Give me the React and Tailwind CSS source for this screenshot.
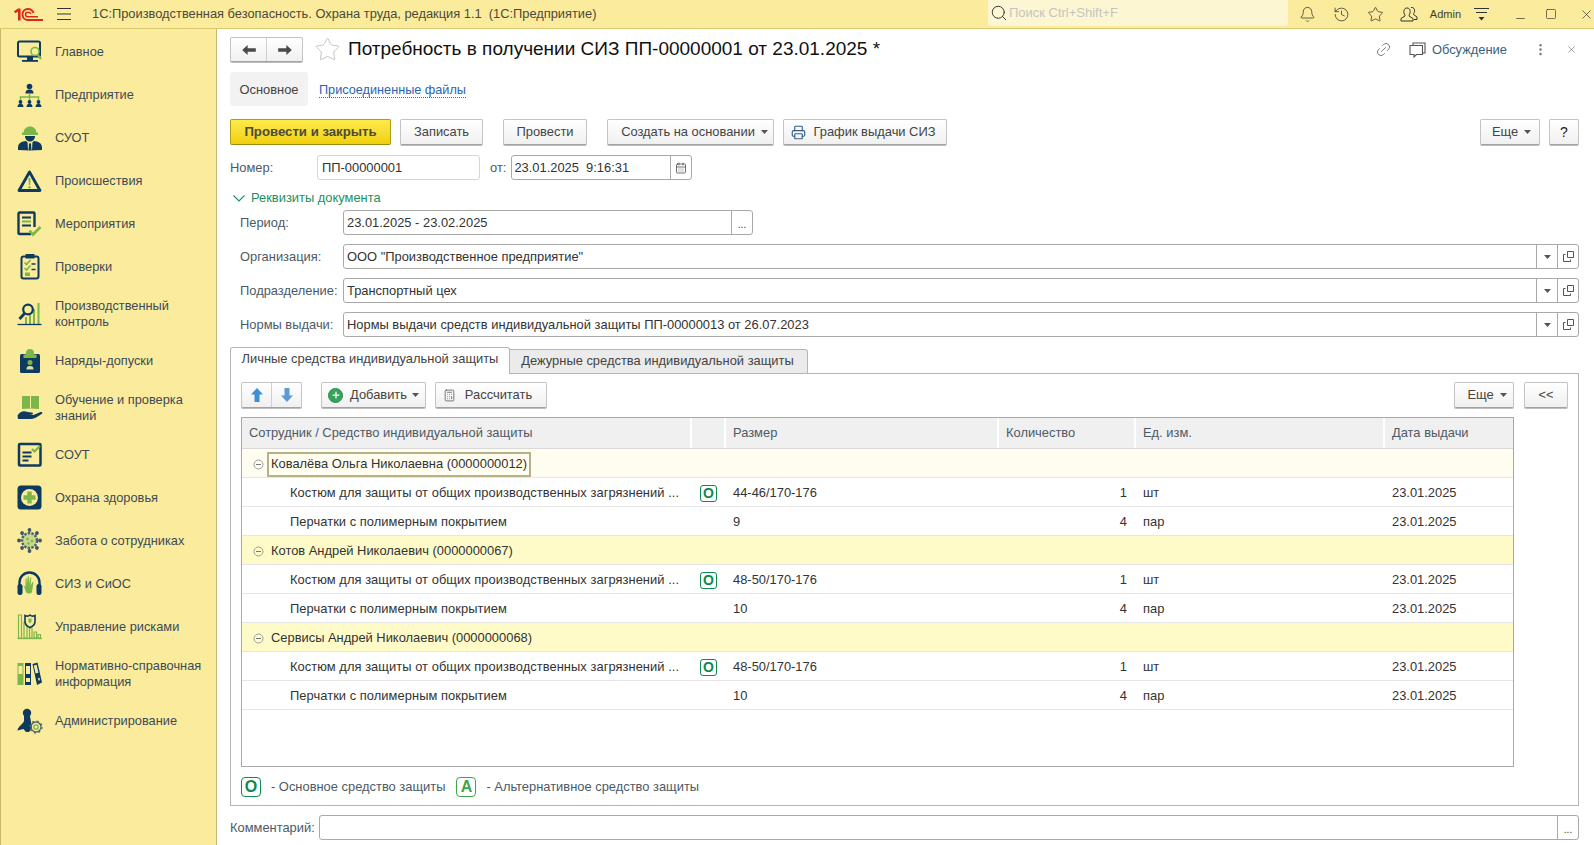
import React from "react";
import { Bell, History, Star, Link2, EllipsisVertical, X, Calculator, Printer, CalendarDays, Search, Minus, Square, Plus } from "lucide-react";

const N = "#0e3a5f";
const G = "#7cb648";
const Y = "#fbec9d";

const Caret = ({ className = "" }) => (
  <svg width="7" height="4" viewBox="0 0 7 4" className={className}><path d="M0 0h7L3.500 4z" fill="#555" /></svg>
);

const Icons = {
  main: (
    <svg width="26" height="24" viewBox="0 0 26 24" fill="none">
      <rect x="1" y="1.500" width="22" height="15" rx="1.500" stroke={N} strokeWidth="2" />
      <path d="M5 20h16v1.800H5z" fill={N} /><path d="M10 17h6v3h-6z" fill={N} />
      <circle cx="18" cy="11.500" r="4" stroke={G} strokeWidth="1.600" fill={Y} /><path d="m20.500 14.500 3.500 4.500" stroke={G} strokeWidth="2.200" />
    </svg>
  ),
  org: (
    <svg width="26" height="24" viewBox="0 0 26 24" fill="none">
      <circle cx="12.500" cy="3.500" r="2.800" fill={N} /><path d="M8.500 10.500c0-3.500 2-4 4-4s4 .5 4 4z" fill={N} />
      <path d="M12.500 10.500v3.500M3.500 18v-4h18v4M12.500 14v4" stroke={G} strokeWidth="1.500" />
      {[3.500, 12.500, 21.500].map((x) => (
        <g key={x}><circle cx={x} cy="19" r="1.900" fill={N} /><path d={`M${x - 3} 24.500c0-3 1-3.800 3-3.800s3 .8 3 3.800z`} fill={N} /></g>
      ))}
    </svg>
  ),
  suot: (
    <svg width="26" height="26" viewBox="0 0 26 26" fill="none">
      <path d="M6.500 8.500c0-4.500 3-7 6.500-7s6.500 2.500 6.500 7z" fill={G} /><path d="M5 7.500h16V10H5z" fill={G} />
      <path d="M8 11h10c0 3-2 5.500-5 5.500S8 14 8 11z" fill={N} />
      <path d="M1 25v-2.500c0-4.500 4-6 8-6.500l4 3 4-3c4 .5 8 2 8 6.500V25c-8 .5-16 .5-24 0z" fill={N} />
      <path d="M10.500 16.500 13 19l2.500-2.500-.5 8.500h-4z" fill={Y} /><path d="M12 18.500h2l.5 6.500h-3z" fill={N} />
    </svg>
  ),
  inc: (
    <svg width="26" height="24" viewBox="0 0 26 24" fill="none">
      <path d="M12.500 3 2 21.500h21z" stroke={N} strokeWidth="2.800" strokeLinejoin="round" />
      <path d="M11.500 9h2l-.3 7h-1.400z" fill={G} /><circle cx="12.500" cy="18.300" r="1.200" fill={G} />
    </svg>
  ),
  ev: (
    <svg width="26" height="26" viewBox="0 0 26 26" fill="none">
      <path d="M14 23H2.500a1 1 0 0 1-1-1V2.500a1 1 0 0 1 1-1h14a1 1 0 0 1 1 1V16" stroke={N} strokeWidth="2.400" />
      <path d="M5 6.500h9" stroke={N} strokeWidth="2" /><path d="M5 10.500h9" stroke={G} strokeWidth="2" /><path d="M5 14.500h9" stroke={N} strokeWidth="2" />
      <path d="m12.500 19.500 3.500 4L23.500 16" stroke={G} strokeWidth="2.600" />
    </svg>
  ),
  chk: (
    <svg width="26" height="28" viewBox="0 0 26 28" fill="none">
      <rect x="4.500" y="3.500" width="17" height="22" rx="2" stroke={N} strokeWidth="2" />
      <path d="M8.500 1h9v4.500h-9z" fill={N} />
      <path d="m7.500 9.500 2 2 4-4.500M7.500 15l2 2 4-4.500" stroke={G} strokeWidth="1.700" />
      <path d="M14.500 11h4M14.500 16.500h4" stroke={N} strokeWidth="1.300" /><path d="M8 19.500h5v3.500H8z" fill={G} />
    </svg>
  ),
  pc: (
    <svg width="26" height="24" viewBox="0 0 26 24" fill="none">
      <path d="M9 15v7M13 13v9M17 7v15M21.500 1v21" stroke={G} strokeWidth="2" />
      <circle cx="11" cy="7.500" r="4.800" stroke={N} strokeWidth="2.200" fill={Y} /><path d="M7.500 11.500 2.500 17" stroke={N} strokeWidth="2.800" />
      <path d="M0.500 22.500h24" stroke={N} strokeWidth="1.300" />
    </svg>
  ),
  nar: (
    <svg width="26" height="26" viewBox="0 0 26 26" fill="none">
      <rect x="3" y="6" width="20" height="19" rx="1.500" fill={N} /><path d="M9 6.500V5a4 4 0 0 1 8 0v1.500h2.500v3.500h-13V6.500z" fill={G} />
      <circle cx="13" cy="14.500" r="2.500" fill={G} /><path d="M9.500 21.500c0-3 1.500-3.500 3.500-3.500s3.500 .5 3.500 3.500z" fill="#d5e0a8" />
    </svg>
  ),
  edu: (
    <svg width="26" height="26" viewBox="0 0 26 26" fill="none">
      <path d="M5 1h8.500v12.500l-8.500.5zM13.500 1H22v13l-8.500-.5z" fill={G} /><path d="M13.500 1v12" stroke={Y} />
      <path d="M1 24l-.500-3.500c3-5 7-5 10-3.500l4 .5c2 0 2 2 0 2h-2l4 .5 7-3c2-.5 2.500 1 1 2-4 3-8 5-11 5-4 0-8 0-12.500 0z" fill={N} />
    </svg>
  ),
  sout: (
    <svg width="26" height="26" viewBox="0 0 26 26" fill="none">
      <rect x="2" y="2" width="21.500" height="21.500" rx="1" stroke={N} strokeWidth="2.500" />
      <path d="M5.500 10.500h9M5.500 14.500h9M5.500 18.500h6" stroke={N} strokeWidth="2" /><path d="m15 7 2.500 2.500L23 4" stroke={G} strokeWidth="2.200" />
    </svg>
  ),
  med: (
    <svg width="26" height="26" viewBox="0 0 26 26" fill="none">
      <rect x="0.500" y="0.500" width="24" height="24" rx="3.500" fill={N} /><circle cx="12.500" cy="12.500" r="8.500" fill={Y} />
      <path d="M10.300 6.500h4.400v3.800h3.800v4.400h-3.800v3.800h-4.400v-3.800H6.500v-4.400h3.800z" fill={G} />
    </svg>
  ),
  care: (
    <svg width="26" height="26" viewBox="0 0 26 26" fill="none">
      <circle cx="12.500" cy="12.500" r="7.500" fill="#c9d98a" stroke="#4b6670" strokeWidth="2.500" strokeDasharray="2.500 1.200" />
      <circle cx="10.500" cy="11" r="1.300" fill={G} /><circle cx="15" cy="13" r="1.300" fill={G} /><circle cx="11.500" cy="15.500" r="1.300" fill={G} />
      {[0, 45, 90, 135, 180, 225, 270, 315].map((a) => (
        <circle key={a} cx="12.500" cy="2" r="1.900" fill="#3f566b" transform={`rotate(${a} 12.500 12.500)`} />
      ))}
    </svg>
  ),
  siz: (
    <svg width="26" height="26" viewBox="0 0 26 26" fill="none">
      <path d="M2.500 14v-2.500a10 10 0 0 1 20 0V14" stroke={N} strokeWidth="2.400" />
      <rect x="0.500" y="13" width="5" height="11" rx="2.200" fill={N} /><rect x="19.500" y="13" width="5" height="11" rx="2.200" fill={N} />
      <path d="M9 21l-2.500-7 2 2V7.500h1.200v6l1-8h1.200v8l1.300-7h1.100l-.8 8 2-3.500h1L15 21c-1 2-5 2-6 0z" fill={G} />
    </svg>
  ),
  risk: (
    <svg width="26" height="26" viewBox="0 0 26 26" fill="none">
      <path d="M1.500 1h3v23h-3zM7 8h3v16H7zM12.500 14H15v10h-2.500zM17 18h2.500v6H17zM21 20.500h2.500V24H21z" stroke={G} strokeWidth="1.200" />
      <path d="M0.500 24.500h24.500" stroke={G} strokeWidth="1.300" />
      <path d="M8 1.500c2 1 3.500 1 5-.5 1.500 1.500 3 1.500 5 .5v6c0 3-2.500 5-5 6-2.500-1-5-3-5-6z" fill={Y} stroke={N} strokeWidth="1.600" />
      <path d="M11.500 4.500h3v3L13 9.500l-1.500-2z" fill={G} />
    </svg>
  ),
  ref: (
    <svg width="26" height="24" viewBox="0 0 26 24" fill="none">
      <rect x="0.500" y="1" width="6" height="22" fill={G} /><rect x="8" y="1" width="6" height="22" fill={N} />
      <path d="M15.500 2l5-1.500 4.500 20-5 2.500z" fill={N} />
      <path d="M1.500 4h4v8h-4zM9 4h4v8H9zM16.800 3.500l2.800-.8 1.800 8-2.800.8z" fill={Y} /><path d="M9 16h4v4H9zM21 16l1.500-.3.500 2.500-1.500.3z" fill={Y} />
    </svg>
  ),
  adm: (
    <svg width="26" height="26" viewBox="0 0 26 26" fill="none">
      <circle cx="10" cy="5" r="4.200" fill={N} /><path d="M7 8h6l1 6 1 6-3 4H9l-2.500-3-6 1.500c0-3.500 5.500-6.500 6.500-9.500z" fill={N} />
      <circle cx="19" cy="19" r="2.200" stroke={G} strokeWidth="1.300" /><circle cx="19" cy="19" r="5" stroke="#4b6670" strokeWidth="1.300" /><circle cx="19" cy="19" r="6" stroke="#4b6670" strokeWidth="1.300" strokeDasharray="2 2.700" />
    </svg>
  ),
};

const NAV = [
  ["main", ["Главное"]], ["org", ["Предприятие"]], ["suot", ["СУОТ"]], ["inc", ["Происшествия"]], ["ev", ["Мероприятия"]], ["chk", ["Проверки"]],
  ["pc", ["Производственный", "контроль"]], ["nar", ["Наряды-допуски"]], ["edu", ["Обучение и проверка", "знаний"]], ["sout", ["СОУТ"]],
  ["med", ["Охрана здоровья"]], ["care", ["Забота о сотрудниках"]], ["siz", ["СИЗ и СиОС"]], ["risk", ["Управление рисками"]],
  ["ref", ["Нормативно-справочная", "информация"]], ["adm", ["Администрирование"]],
];

function Btn({ children, className = "", primary }) {
  return (
    <div
      className={
        "flex h-[26px] shrink-0 items-center justify-center rounded-[2px] border " +
        (primary
          ? "border-[#b29b16] border-b-[#9c8a10] bg-gradient-to-b from-[#fdeb48] to-[#f1d000] text-[13.200px] font-bold text-[#4b4b3a] "
          : "border-[#c4c4c4] border-b-[#a2a2a2] bg-gradient-to-b from-white to-[#f0f0f0] text-[12.900px] text-[#444] shadow-[0_1px_0_#bdbdbd] ") +
        className
      }
    >
      {children}
    </div>
  );
}

function Field({ children, className = "" }) {
  return <div className={"flex h-[25px] items-center rounded-[3px] border border-[#a9a9a9] bg-white text-[#333] " + className}>{children}</div>;
}

function LinkField({ label, value }) {
  return (
    <div className="flex h-[25px] items-center pl-[10px]">
      <div className="w-[103px] text-[#4d5a66]">{label}</div>
      <Field className="flex-1">
        <div className="flex-1 pl-[3px]">{value}</div>
        <div className="flex h-full w-[21px] items-center justify-center border-l border-[#a9a9a9]"><Caret /></div>
        <div className="flex h-full w-[21px] items-center justify-center border-l border-[#a9a9a9]">
          <svg width="13" height="13" viewBox="0 0 13 13" fill="none"><path d="M5.500 1.500h6v6h-6z" stroke="#555" /><path d="M3.500 4.500h-2v7h7v-2" stroke="#555" /></svg>
        </div>
      </Field>
    </div>
  );
}

const COLS = "grid grid-cols-[450px_34px_273px_137px_249px_1fr]";

function Badge({ small, letter = "O", green = "#0d8a4f" }) {
  return (
    <div
      style={{ borderColor: green, color: green }}
      className={(small ? "h-[17px] w-[17px] rounded-[3px] text-[14px] " : "h-[20px] w-[20px] rounded-[4px] text-[16px] ") + "flex items-center justify-center border bg-white font-bold"}
    >
      {letter}
    </div>
  );
}

function Group({ name, selected }) {
  return (
    <div className={COLS + " h-[29px] items-center border-b border-[#e6e6e6] " + (selected ? "bg-[#fffdf0]" : "bg-[#fefbc9]")}>
      <div className="col-span-6 flex items-center pl-[11px] pt-[2px]">
        <svg width="11" height="11" viewBox="0 0 11 11" fill="none"><circle cx="5.500" cy="5.500" r="4.500" stroke="#9c9c9c" /><path d="M3 5.500h5" stroke="#777" /></svg>
        <div className={"ml-[3px] flex h-[25px] items-center px-[2px] text-[#333] " + (selected ? "border-2 border-[#b7b286]" : "border-2 border-transparent")}>{name}</div>
      </div>
    </div>
  );
}

function Item({ name, badge, size, qty, unit, date = "23.01.2025" }) {
  return (
    <div className={COLS + " h-[29px] items-center border-b border-[#e6e6e6] bg-white pt-[2px] text-[#333]"}>
      <div className="whitespace-nowrap pl-[48px] tracking-[0.05px]">{name}</div>
      <div className="flex justify-center pr-[1px]">{badge && <Badge small />}</div>
      <div className="pl-[7px]">{size}</div>
      <div className="pr-[9px] text-right">{qty}</div>
      <div className="pl-[7px]">{unit}</div>
      <div className="pl-[7px]">{date}</div>
    </div>
  );
}

const Head = ({ children, last }) => (
  <div className={"flex h-full items-center bg-[#f0f0f0] pl-[7px] text-[#4d5a66] " + (last ? "" : "border-r-2 border-white")}>{children}</div>
);

export default function App() {
  const suit = "Костюм для защиты от общих производственных загрязнений ...";
  const gl = "Перчатки с полимерным покрытием";
  return (
    <div className="flex h-[845px] w-[1594px] flex-col overflow-hidden bg-white font-['Liberation_Sans',Arial,sans-serif] text-[12.900px]">
      {/* title bar */}
      <div className="flex h-[29px] shrink-0 items-center border-b border-[#d8c86e] bg-[#fbec9d]">
        <svg width="29" height="13" viewBox="0 0 29 13" fill="none" className="ml-[14px]">
          <path d="M0 3.200 4 .5h2.600v12H4V3.800L1.200 5.300z" fill="#d92a1c" />
          <path d="M19.500 5C18.500 2 16.500 1 14 1c-3.500 0-5.500 2.500-5.500 5.500S10.500 12 14 12h15" stroke="#d92a1c" strokeWidth="2" />
          <path d="M17 6c-.5-1-1.500-1.700-3-1.700s-2.500 1-2.500 2.200 1 2.300 2.500 2.300h10" stroke="#d92a1c" strokeWidth="1.600" />
        </svg>
        <svg width="14" height="14" viewBox="0 0 14 14" className="ml-[14px]"><path d="M0 1.500h14M0 7h14M0 12.500h14" stroke="#333" strokeWidth="1.100" /></svg>
        <div className="ml-[21px] w-[896px] whitespace-pre text-[12.850px] text-[#4a4a3a]">1С:Производственная безопасность. Охрана труда, редакция 1.1  (1С:Предприятие)</div>
        <div className="flex h-[26px] w-[300px] items-center self-start rounded-b-[3px] bg-[#fdf6d2] pl-[2px]">
          <Search size={18} strokeWidth={1.300} className="text-[#333]" />
          <span className="ml-[1px] text-[13px] text-[#c5c5c0]">Поиск Ctrl+Shift+F</span>
        </div>
        <Bell size={17} strokeWidth={1.100} className="ml-[11px] text-[#333]" />
        <History size={17} strokeWidth={1.100} className="ml-[17px] text-[#333]" />
        <Star size={17} strokeWidth={1.100} className="ml-[17px] text-[#333]" />
        <svg width="18" height="17" viewBox="0 0 18 17" fill="none" className="ml-[16px]" stroke="#333" strokeWidth="1">
          <path d="M7 2c3 0 3.500 3 3 5-.5 1.500-1 2-1 3l4 2.500V15H1v-2.500L5 10c0-1-.5-1.500-1-3-.5-2 0-5 3-5z" />
          <path d="M11 1.500c2.500-.500 4 1.500 3.500 4-.3 1.500-1 2-1 3l3.500 2.500v2.500h-3" />
        </svg>
        <span className="ml-[12px] text-[11px] text-[#3e3e2e]">Admin</span>
        <svg width="15" height="14" viewBox="0 0 15 14" fill="none" className="ml-[13px]"><path d="M0 1.500h15M2 5.500h11" stroke="#333" /><path d="M4.500 10h6l-3 3.500z" fill="#333" /></svg>
        <Minus size={13} strokeWidth={1.200} className="ml-[25px] mt-[9px] text-[#222]" />
        <Square size={12} strokeWidth={1.200} className="ml-[18px] text-[#222]" />
        <X size={15} strokeWidth={1} className="ml-[22px] text-[#222]" />
      </div>

      <div className="flex min-h-0 flex-1">
        {/* sidebar */}
        <div className="w-[217px] shrink-0 border-x border-x-[#c4b96f] bg-[#fbec9d] pl-[16px] pt-[1px]">
          {NAV.map(([k, lines]) => (
            <div key={k} className={"flex items-center " + (lines.length > 1 ? "h-[51px]" : "h-[43px]")}>
              <div className="flex w-[38px] shrink-0 items-center">{Icons[k]}</div>
              <div className="text-[12.800px] leading-[16px] text-[#3d4a55]">{lines.map((l) => <div key={l}>{l}</div>)}</div>
            </div>
          ))}
        </div>

        {/* content */}
        <div className="min-w-0 flex-1 pl-[13px] pr-[15px] pt-[8px]">
          <div className="flex h-[25px] items-center">
            <div className="flex h-[25px] w-[73px] rounded-[2px] border border-[#c4c4c4] border-b-[#a2a2a2] bg-gradient-to-b from-white to-[#f0f0f0] shadow-[0_1px_0_#bdbdbd]">
              <div className="flex flex-1 items-center justify-center border-r border-[#d0d0d0]">
                <svg width="14" height="10" viewBox="0 0 15 11"><path d="M0 5.500 6 0v3.500h9v4H6V11z" fill="#4a4a4a" /></svg>
              </div>
              <div className="flex flex-1 items-center justify-center">
                <svg width="14" height="10" viewBox="0 0 15 11"><path d="M15 5.500 9 0v3.500H0v4h9V11z" fill="#4a4a4a" /></svg>
              </div>
            </div>
            <Star size={27} strokeWidth={0.700} className="ml-[11px] text-[#b4b4b4]" />
            <div className="ml-[7px] flex-1 whitespace-nowrap text-[19px] text-[#111]">Потребность в получении СИЗ ПП-00000001 от 23.01.2025 *</div>
            <Link2 size={17} strokeWidth={1.100} className="-rotate-45 text-[#666]" />
            <svg width="17" height="16" viewBox="0 0 17 16" fill="none" className="ml-[17px]" stroke="#555" strokeWidth="1.100"><path d="M4 3V1h12v10h-2" /><path d="M1 3.500h12.500v9H7.500l-2.500 2.500v-2.500H1z" /></svg>
            <span className="ml-[6px] text-[#39617f]">Обсуждение</span>
            <EllipsisVertical size={15} strokeWidth={2} className="ml-[26px] text-[#777]" />
            <X size={11} strokeWidth={1.300} className="ml-[18px] mr-[2px] text-[#666]" />
          </div>

          <div className="mt-[10px] flex h-[34px] items-center">
            <div className="flex h-full w-[78px] items-center justify-center rounded-[3px] bg-[#f2f2f2] pt-[2px] text-[#444]">Основное</div>
            <span className="ml-[11px] mt-[2px] border-b border-dotted border-[#2b6cb0] text-[12.700px] leading-[14px] text-[#2a63b1]">Присоединенные файлы</span>
          </div>

          <div className="mt-[13px] flex">
            <Btn primary className="w-[161px]">Провести и закрыть</Btn>
            <Btn className="ml-[9px] w-[83px]">Записать</Btn>
            <Btn className="ml-[20px] w-[84px]">Провести</Btn>
            <Btn className="ml-[20px] w-[167px] pl-[8px]">Создать на основании<Caret className="ml-[6px]" /></Btn>
            <Btn className="ml-[9px] w-[164px] pr-[3px]"><Printer size={15} strokeWidth={1.800} className="mr-[7px] text-[#335f86]" />График выдачи СИЗ</Btn>
            <div className="flex-1" />
            <Btn className="w-[60px] pl-[3px]">Еще<Caret className="ml-[6px]" /></Btn>
            <Btn className="ml-[9px] w-[30px]"><span className="text-[14px] text-[#222]">?</span></Btn>
          </div>

          <div className="mt-[10px] flex h-[25px] items-center">
            <div className="w-[87px] text-[#4d5a66]">Номер:</div>
            <Field className="w-[163px] border-[#d6d6d6] pl-[4px]">ПП-00000001</Field>
            <span className="ml-[10px] text-[#4d5a66]">от:</span>
            <Field className="ml-[5px] w-[181px]">
              <div className="flex-1 whitespace-pre pl-[2px]">23.01.2025  9:16:31</div>
              <div className="flex h-full w-[21px] items-center justify-center border-l border-[#a9a9a9]"><CalendarDays size={12} strokeWidth={1.500} className="text-[#444]" /></div>
            </Field>
          </div>

          <div className="mt-[10px] flex h-[16px] items-center pl-[3px] text-[#1a9160]">
            <svg width="12" height="7" viewBox="0 0 12 7" fill="none"><path d="M.5.500 6 6 11.500.5" stroke="#1a9160" strokeWidth="1.100" /></svg>
            <span className="ml-[6px]">Реквизиты документа</span>
          </div>

          <div className="mt-[4px] flex h-[25px] items-center pl-[10px]">
            <div className="w-[103px] text-[#4d5a66]">Период:</div>
            <Field className="w-[410px]">
              <div className="flex-1 pl-[3px]">23.01.2025 - 23.02.2025</div>
              <div className="flex h-full w-[21px] items-end justify-center border-l border-[#a9a9a9] pb-[4px] text-[10px] leading-[10px]">...</div>
            </Field>
          </div>
          <div className="mt-[9px] flex flex-col gap-[9px]">
            <LinkField label="Организация:" value={'ООО "Производственное предприятие"'} />
            <LinkField label="Подразделение:" value="Транспортный цех" />
            <LinkField label="Нормы выдачи:" value="Нормы выдачи средств индивидуальной защиты ПП-00000013 от 26.07.2023" />
          </div>

          {/* tabs */}
          <div className="mt-[10px] flex h-[27px]">
            <div className="relative z-10 flex h-[27px] w-[280px] items-center justify-center rounded-t-[3px] border border-b-0 border-[#b5b5b5] bg-white pb-[4px] text-[#444]">Личные средства индивидуальной защиты</div>
            <div className="mt-[2px] flex h-[25px] w-[298px] items-center justify-center rounded-tr-[3px] border border-l-0 border-[#b5b5b5] bg-[#ebebeb] pb-[2px] pr-[2px] text-[#444]">Дежурные средства индивидуальной защиты</div>
          </div>
          <div className="-mt-px flex h-[433px] flex-col border border-[#b5b5b5] px-[10px] pt-[8px]">
            <div className="flex">
              <div className="flex h-[26px] w-[61px] rounded-[2px] border border-[#c4c4c4] border-b-[#a2a2a2] bg-gradient-to-b from-white to-[#f0f0f0] shadow-[0_1px_0_#bdbdbd]">
                <div className="flex flex-1 items-center justify-center border-r border-[#d0d0d0]">
                  <svg width="12" height="14" viewBox="0 0 12 14"><path d="M6 0l6 6.500H8.500V14h-5V6.500H0z" fill="#3d8fd6" /></svg>
                </div>
                <div className="flex flex-1 items-center justify-center">
                  <svg width="12" height="14" viewBox="0 0 12 14"><path d="M6 14l6-6.500H8.500V0h-5v7.500H0z" fill="#5e9ad3" /></svg>
                </div>
              </div>
              <Btn className="ml-[19px] w-[105px]">
                <span className="mr-[7px] flex h-[15px] w-[15px] items-center justify-center rounded-full border border-[#2c8f4d] bg-[#35a35b]"><Plus size={10} strokeWidth={3} className="text-white" /></span>
                Добавить<Caret className="ml-[5px]" />
              </Btn>
              <Btn className="ml-[9px] w-[112px] pr-[7px]"><Calculator size={13} strokeWidth={1.300} className="mr-[9px] text-[#444]" />Рассчитать</Btn>
              <div className="flex-1" />
              <Btn className="w-[60px] pl-[6px]">Еще<Caret className="ml-[6px]" /></Btn>
              <Btn className="ml-[10px] w-[44px]">&lt;&lt;</Btn>
            </div>

            <div className="mt-[9px] h-[350px] w-[1273px] border border-[#a8a8a8]">
              <div className={COLS + " h-[31px] items-center border-b border-[#d9d9d9]"}>
                <Head>Сотрудник / Средство индивидуальной защиты</Head>
                <Head />
                <Head>Размер</Head>
                <Head>Количество</Head>
                <Head>Ед. изм.</Head>
                <Head last>Дата выдачи</Head>
              </div>
              <Group selected name="Ковалёва Ольга Николаевна (0000000012)" />
              <Item name={suit} badge size="44-46/170-176" qty="1" unit="шт" />
              <Item name={gl} size="9" qty="4" unit="пар" />
              <Group name="Котов Андрей Николаевич (0000000067)" />
              <Item name={suit} badge size="48-50/170-176" qty="1" unit="шт" />
              <Item name={gl} size="10" qty="4" unit="пар" />
              <Group name="Сервисы Андрей Николаевич (0000000068)" />
              <Item name={suit} badge size="48-50/170-176" qty="1" unit="шт" />
              <Item name={gl} size="10" qty="4" unit="пар" />
            </div>

            <div className="mt-[10px] flex h-[20px] items-center text-[#4d5a66]">
              <Badge />
              <span className="ml-[10px]">- Основное средство защиты</span>
              <div className="ml-[11px]"><Badge letter="А" green="#3fa648" /></div>
              <span className="ml-[10px]">- Альтернативное средство защиты</span>
            </div>
          </div>

          <div className="mt-[9px] flex h-[25px] items-center">
            <span className="w-[89px] text-[#4d5a66]">Комментарий:</span>
            <Field className="flex-1">
              <div className="flex-1" />
              <div className="flex h-full w-[21px] items-end justify-center border-l border-[#a9a9a9] pb-[4px] text-[10px] leading-[10px]">...</div>
            </Field>
          </div>
        </div>
      </div>
    </div>
  );
}
